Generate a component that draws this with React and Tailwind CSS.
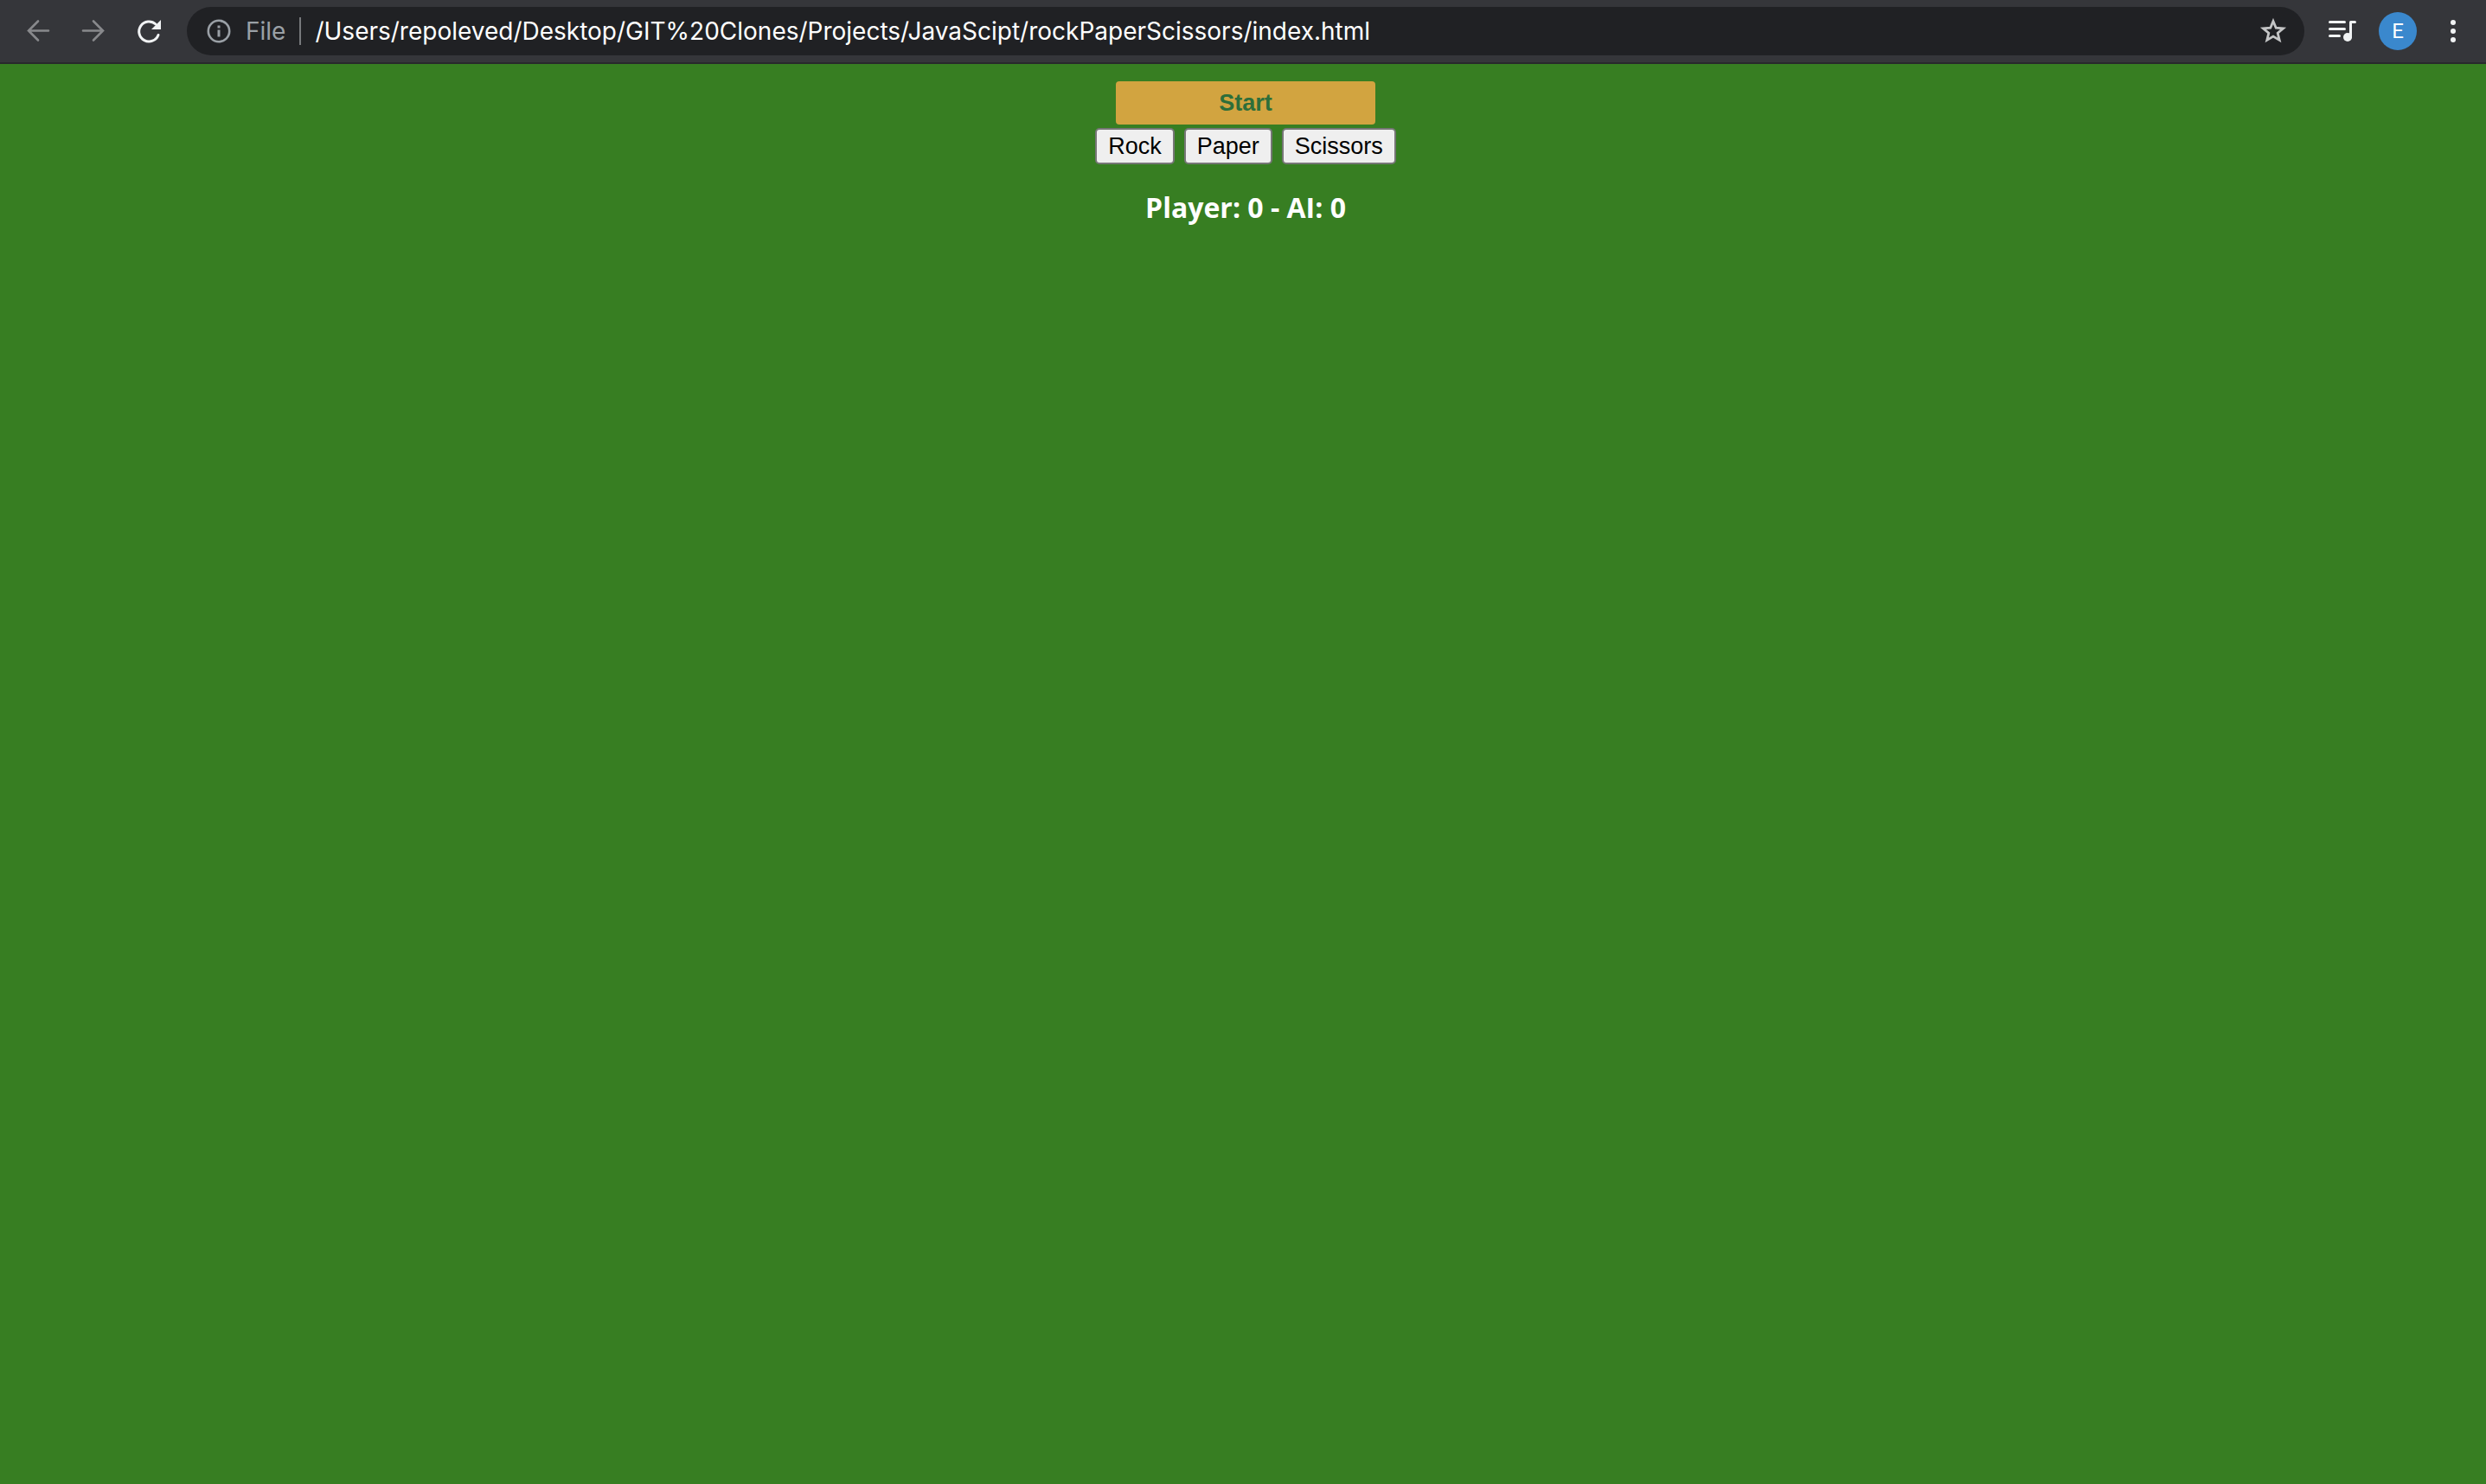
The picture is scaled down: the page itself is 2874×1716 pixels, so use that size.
import React, { useState } from "react";

const iconButton = "flex size-8 shrink-0 items-center justify-center";

function Toolbar() {
  return (
    <header className="flex h-[74px] items-center border-b-2 border-[#28292c] bg-[#35363a] pr-[22px] pl-7">
      <nav className="flex w-[188px] shrink-0 items-center gap-8" aria-label="Browser">
        <button type="button" aria-label="Back" className={iconButton}>
          <svg viewBox="0 0 32 32" className="size-8" fill="none" stroke="#88898c" strokeWidth="2.6" strokeLinecap="round">
            <path d="M28 15.5H5M16 4.5L5 15.5l11 11" />
          </svg>
        </button>
        <button type="button" aria-label="Forward" className={iconButton}>
          <svg viewBox="0 0 32 32" className="size-8" fill="none" stroke="#88898c" strokeWidth="2.6" strokeLinecap="round">
            <path d="M4 15.5h23M16 4.5l11 11-11 11" />
          </svg>
        </button>
        <button type="button" aria-label="Reload" className={iconButton}>
          <svg viewBox="0 0 32 32" className="size-8" fill="none">
            <path d="M27 20.5A11.5 11.5 0 1 1 24 8" stroke="#f1f3f4" strokeWidth="3" strokeLinecap="round" />
            <path d="M30 3v11H19z" fill="#f1f3f4" />
          </svg>
        </button>
      </nav>
      <div className="flex h-14 min-w-0 grow items-center rounded-full bg-[#202124] pr-5 pl-[22px]">
        <svg viewBox="0 0 30 30" className="size-[30px] shrink-0" fill="none">
          <circle cx="15" cy="15" r="12.2" stroke="#9aa0a6" strokeWidth="2.6" />
          <path d="M13.5 8.5h3v3h-3zM13.5 13.5h3v8h-3z" fill="#9aa0a6" />
        </svg>
        <span className="ml-4 text-[28px] leading-8 text-[#9aa0a6]">File</span>
        <span className="ml-4 h-8 w-0.5 shrink-0 bg-[#77797c]" />
        <input
          type="text"
          aria-label="Address"
          defaultValue="/Users/repoleved/Desktop/GIT%20Clones/Projects/JavaScipt/rockPaperScissors/index.html"
          className="ml-4 h-10 min-w-0 grow bg-transparent text-[28px] text-white outline-none"
        />
        <button type="button" aria-label="Bookmark" className={iconButton}>
          <svg viewBox="0 0 32 32" className="size-8" fill="none" stroke="#c4c5c6" strokeWidth="2.8">
            <path d="M16 4.5l3.2 7.7 8.4.7-6.4 5.4 2 8.1-7.2-4.3-7.2 4.3 2-8.1-6.4-5.4 8.4-.7z" />
          </svg>
        </button>
      </div>
      <button type="button" aria-label="Media controls" className="ml-7 flex size-8 shrink-0 items-center justify-center">
        <svg viewBox="0 0 32 32" className="size-8" fill="none" stroke="#f1f3f4" strokeWidth="3" strokeLinecap="round">
          <path d="M1.5 5.5h17M1.5 13.5h17M1.5 21.5h11" />
          <path d="M25.5 23V5.5h5" strokeLinejoin="round" />
          <circle cx="22" cy="23" r="5" fill="#f1f3f4" stroke="none" />
        </svg>
      </button>
      <button type="button" aria-label="Profile" className="ml-[26px] flex size-11 shrink-0 items-center justify-center rounded-full bg-[#3a88cd] font-['Roboto'] text-2xl text-white">
        E
      </button>
      <button type="button" aria-label="Menu" className="ml-[26px] flex size-8 shrink-0 items-center justify-center">
        <svg viewBox="0 0 32 32" className="size-8" fill="#f1f3f4">
          <circle cx="16" cy="6" r="3" />
          <circle cx="16" cy="16" r="3" />
          <circle cx="16" cy="26" r="3" />
        </svg>
      </button>
    </header>
  );
}

export default function App() {
  const [score] = useState({ player: 0, ai: 0 });
  return (
    <div className="flex min-h-screen flex-col bg-[#377e22] font-['Inter',sans-serif]">
      <Toolbar />
      <main className="flex flex-col items-center pt-5 pl-1.5">
        <button type="button" className="h-[50px] w-[300px] rounded-[4px] bg-[#d2a440] font-['Liberation_Sans',Arial,sans-serif] text-[27px] leading-8 font-bold text-[#2d6e3a]">
          Start
        </button>
        <div className="mt-1 flex gap-[11px]">
          {["Rock", "Paper", "Scissors"].map((name) => (
            <button
              key={name}
              type="button"
              className="h-[42px] rounded-[5px] border-2 border-[#767676] bg-[#efefef] px-[13px] font-['Liberation_Sans',Arial,sans-serif] text-[27px] leading-8 text-black"
            >
              {name}
            </button>
          ))}
        </div>
        <p className="mt-[31px] font-['Trebuchet_MS','Open_Sans',sans-serif] text-[32px] leading-[38px] font-bold text-white">
          Player: {score.player} - AI: {score.ai}
        </p>
      </main>
    </div>
  );
}
